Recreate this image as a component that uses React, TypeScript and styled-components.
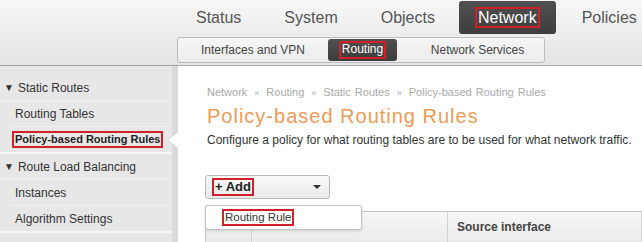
import React from 'react';
import styled, { createGlobalStyle, css } from 'styled-components';

const GlobalStyle = createGlobalStyle`
  html, body {
    margin: 0;
    padding: 0;
    width: 642px;
    height: 242px;
    overflow: hidden;
    background: #fff;
    font-family: "Liberation Sans", Arial, sans-serif;
  }
`;

const Page = styled.div`
  width: 642px;
  height: 242px;
  display: flex;
  flex-direction: column;
  overflow: hidden;
`;

const Header = styled.header`
  height: 65px;
  flex-shrink: 0;
  border-bottom: 1px solid #a8a8a8;
  background: linear-gradient(#f7f7f7, #e4e4e4);
  padding-left: 177px;
  display: flex;
  flex-direction: column;
`;

const MainNav = styled.nav`
  display: flex;
  align-items: stretch;
  height: 33px;
  margin-top: 1px;
  margin-left: 4px;
  gap: 13px;
`;

const MainItem = styled.div<{ $active?: boolean }>`
  display: flex;
  align-items: center;
  padding: 0 15px;
  font-size: 16px;
  color: #555;
  border-radius: 3px;
  white-space: nowrap;
  ${({ $active }) => $active && css`
    background: linear-gradient(#505050, #3e3e3e);
    color: #fff;
    padding: 0 16px;
    margin: 0 -2px 0 -4px;
  `}
`;

const Mark = styled.span`
  border: 2px solid #d0212b;
  padding: 0 1px;
  line-height: 1.1;
`;

const SubNav = styled.div`
  display: flex;
  align-items: stretch;
  width: 366px;
  height: 24px;
  margin-top: 3px;
  border: 1px solid #bcbcbc;
  border-radius: 3px;
  background: linear-gradient(#f6f6f6, #ececec);
  box-sizing: content-box;
`;

const SubItem = styled.div<{ $active?: boolean; $width?: number }>`
  display: flex;
  align-items: center;
  justify-content: center;
  flex: ${({ $width }) => ($width ? `0 0 ${$width}px` : '1')};
  padding-left: ${({ $width }) => ($width ? 0 : 14)}px;
  font-size: 12px;
  color: #444;
  white-space: nowrap;
  ${({ $active }) => $active && css`
    background: linear-gradient(#505050, #3c3c3c);
    color: #fff;
    border-radius: 3px;
    margin: 1px 0;
  `}
`;

const Body = styled.div`
  flex: 1;
  display: flex;
  min-height: 0;
`;

const Sidebar = styled.aside`
  width: 172px;
  flex-shrink: 0;
  background: #e7e7e7;
  border-right: 6px solid #dadada;
  padding-top: 9px;
`;

const Group = styled.div`
  border-bottom: 2px solid #f6f6f6;
`;

const GroupTitle = styled.div`
  height: 25px;
  display: flex;
  align-items: center;
  padding-left: 4px;
  font-size: 12px;
  color: #333;
  border-bottom: 1px solid #f1f1f1;
`;

const Caret = styled.span`
  font-size: 10px;
  margin-right: 4px;
  color: #333;
`;

const NavLink = styled.div<{ $active?: boolean; $last?: boolean }>`
  position: relative;
  height: 25px;
  display: flex;
  align-items: center;
  padding-left: 5px;
  margin-left: 10px;
  font-size: 12px;
  color: #333;
  white-space: nowrap;
  border-bottom: ${({ $last }) => ($last ? 'none' : '1px solid #f1f1f1')};
  ${({ $active }) => $active && css`
    font-weight: bold;
    font-size: 11px;
    padding-left: 2px;
    color: #222;
  `}
`;

const Pointer = styled.span`
  position: absolute;
  right: -6px;
  top: 4px;
  width: 0;
  height: 0;
  border-top: 9px solid transparent;
  border-bottom: 9px solid transparent;
  border-right: 11px solid #cfcfcf;

  &::after {
    content: '';
    position: absolute;
    top: -8px;
    left: 1px;
    border-top: 8px solid transparent;
    border-bottom: 8px solid transparent;
    border-right: 10px solid #fff;
  }
`;

const Content = styled.main`
  flex: 1;
  min-width: 0;
  padding: 20px 0 0 29px;
  display: flex;
  flex-direction: column;
`;

const Crumbs = styled.div`
  font-size: 11px;
  color: #a9a9a9;
  white-space: nowrap;
  word-spacing: 1px;
`;

const Sep = styled.span`
  margin: 0 7px;
  font-size: 9px;
`;

const Title = styled.h1`
  margin: 7px 0 0;
  font-weight: normal;
  font-size: 20px;
  letter-spacing: 1px;
  color: #ef9a57;
  white-space: nowrap;
`;

const Lead = styled.p`
  margin: 5px 0 0;
  font-size: 12px;
  color: #333;
  white-space: nowrap;
`;

const ActionArea = styled.div`
  position: relative;
  margin: 28px 0 0 -2px;
`;

const AddButton = styled.div`
  width: 109px;
  height: 22px;
  border: 1px solid #b9b9b9;
  border-radius: 3px;
  background: linear-gradient(#fbfbfb, #e9e9e9);
  display: flex;
  align-items: center;
  justify-content: space-between;
  padding: 0 8px 0 6px;
  box-sizing: content-box;
  font-size: 13px;
  font-weight: bold;
  color: #222;
`;

const ButtonCaret = styled.span`
  width: 0;
  height: 0;
  border-left: 4px solid transparent;
  border-right: 4px solid transparent;
  border-top: 4px solid #333;
`;

const Menu = styled.div`
  position: absolute;
  top: 30px;
  left: 0;
  z-index: 2;
  width: 157px;
  height: 25px;
  background: #fff;
  border: 1px solid #c4c4c4;
  border-radius: 3px;
  box-shadow: 0 1px 3px rgba(0, 0, 0, 0.15);
  display: flex;
  align-items: center;
  padding-left: 16px;
  box-sizing: border-box;
  font-size: 11.5px;
  color: #333;
`;

const Table = styled.div`
  margin: 12px 0 0 0;
  display: grid;
  grid-template-columns: 46px 196px 1fr;
  border: 1px solid #c6c6c6;
  border-right: none;
  height: 30px;
`;

const HeadCell = styled.div`
  display: flex;
  align-items: center;
  padding-left: 9px;
  background: linear-gradient(#f7f7f7, #ebebeb);
  border-right: 1px solid #d2d2d2;
  font-size: 12px;
  font-weight: bold;
  color: #444;
  white-space: nowrap;
`;

export default function App() {
  return (
    <Page>
      <GlobalStyle />
      <Header>
        <MainNav>
          <MainItem>Status</MainItem>
          <MainItem>System</MainItem>
          <MainItem>Objects</MainItem>
          <MainItem $active><Mark>Network</Mark></MainItem>
          <MainItem>Policies</MainItem>
        </MainNav>
        <SubNav>
          <SubItem $width={150}>Interfaces and VPN</SubItem>
          <SubItem $active $width={69}><Mark>Routing</Mark></SubItem>
          <SubItem>Network Services</SubItem>
        </SubNav>
      </Header>
      <Body>
        <Sidebar>
          <Group>
            <GroupTitle><Caret>▼</Caret>Static Routes</GroupTitle>
            <NavLink>Routing Tables</NavLink>
            <NavLink $active $last>
              <Mark>Policy-based Routing Rules</Mark>
              <Pointer />
            </NavLink>
          </Group>
          <Group>
            <GroupTitle><Caret>▼</Caret>Route Load Balancing</GroupTitle>
            <NavLink>Instances</NavLink>
            <NavLink $last>Algorithm Settings</NavLink>
          </Group>
        </Sidebar>
        <Content>
          <Crumbs>
            Network<Sep>»</Sep>Routing<Sep>»</Sep>Static Routes<Sep>»</Sep>Policy-based Routing Rules
          </Crumbs>
          <Title>Policy-based Routing Rules</Title>
          <Lead>Configure a policy for what routing tables are to be used for what network traffic.</Lead>
          <ActionArea>
            <AddButton>
              <Mark>+ Add</Mark>
              <ButtonCaret />
            </AddButton>
            <Menu><Mark>Routing Rule</Mark></Menu>
            <Table>
              <HeadCell />
              <HeadCell />
              <HeadCell>Source interface</HeadCell>
            </Table>
          </ActionArea>
        </Content>
      </Body>
    </Page>
  );
}
